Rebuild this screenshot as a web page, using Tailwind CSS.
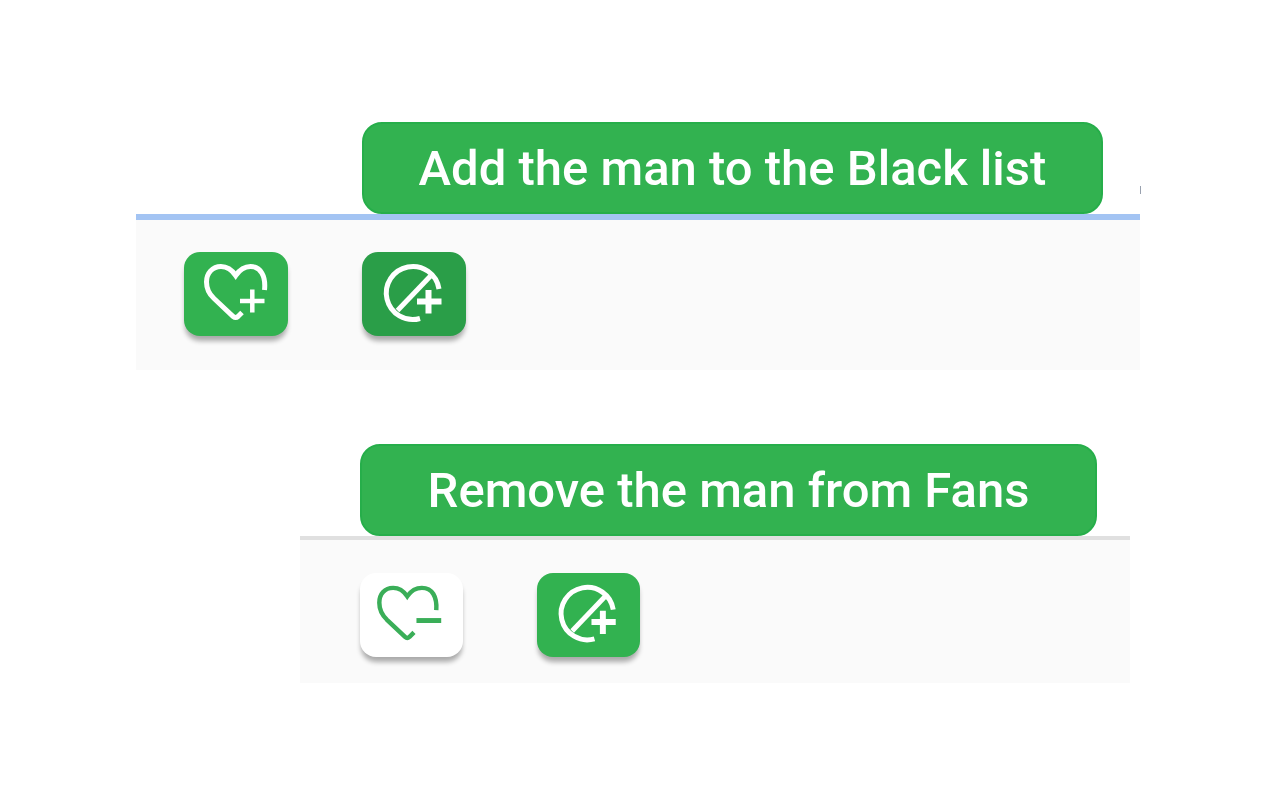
<!DOCTYPE html>
<html lang="en">
<head>
  <meta charset="UTF-8">
  <meta name="viewport" content="width=device-width, initial-scale=1.0">
  <title>Fans and Black list buttons</title>
  <script src="https://cdn.jsdelivr.net/npm/@tailwindcss/browser@4"></script>
  <style>
    body{font-family:Roboto,"Liberation Sans",sans-serif;}
  </style>
</head>
<body class="bg-white min-h-screen">

  <!-- shared icon -->
  <svg class="hidden" aria-hidden="true">
    <symbol id="block-add" viewBox="0 0 104 84">
      <path d="M77 37A26.500 26.500 0 1 0 58 66.500" stroke-width="5"/>
      <path d="M35.500 58.500L68.500 24" stroke-width="5"/>
      <path d="M55 49.500H79.500M66.500 38V61.500" stroke-width="6"/>
    </symbol>
  </svg>

  <main class="flex flex-col gap-[74px] pt-[122px]">

    <!-- man is not a fan yet -->
    <section class="ml-[136px] mr-[140px]">
      <div class="relative">
        <div id="tipBlock" role="tooltip" class="ml-[226px] w-[741px] max-w-full h-[92px] flex items-center justify-center rounded-[20px] bg-[#32b250] border-2 border-[#26ae4a] text-white text-[49px] leading-none font-medium whitespace-nowrap">Add the man to the Black list</div>
        <span class="absolute -right-px bottom-5 w-px h-2 bg-gray-400"></span>
      </div>
      <div class="flex gap-[74px] h-[156px] pl-12 pt-8 bg-[#fafafa] border-t-6 border-[#a3c4f3]">
        <button type="button" aria-label="Add the man to Fans" class="w-[104px] h-[84px] rounded-2xl bg-[#32b250] text-white shadow-[0_6px_5px_-1px_rgba(0,0,0,0.32)]">
          <svg class="block w-full" viewBox="0 0 104 84" fill="none" stroke="currentColor" stroke-width="5">
            <path d="M80.500 38C82 24 76.500 14.500 66.500 14.500C60 14.500 55.500 18 51.700 23.500C48 18 43 14.500 37 14.500C28.500 14.500 22.500 21 22.500 30C22.500 37 25 42 30 46.500L49.200 64.500Q51.700 66.500 54 64.500L58 60.500"/>
            <path d="M56 49H80.500M68.300 37.500V60.500" stroke-width="4.500"/>
          </svg>
        </button>
        <button type="button" aria-describedby="tipBlock" aria-label="Add the man to the Black list" class="w-[104px] h-[84px] rounded-2xl bg-[#2a9e48] text-white shadow-[0_6px_5px_-1px_rgba(0,0,0,0.32)]">
          <svg class="block w-full" viewBox="0 0 104 84" fill="none" stroke="currentColor"><use href="#block-add"/></svg>
        </button>
      </div>
    </section>

    <!-- man is already a fan -->
    <section class="ml-[300px] mr-[150px]">
      <div id="tipFan" role="tooltip" class="ml-[60px] w-[737px] max-w-full h-[92px] flex items-center justify-center rounded-[20px] bg-[#32b250] border-2 border-[#26ae4a] text-white text-[49px] leading-none font-medium whitespace-nowrap">Remove the man from Fans</div>
      <div class="flex gap-[74px] h-[147px] pl-[60px] pt-[33px] bg-[#fafafa] border-t-4 border-[#e0e0e0]">
        <button type="button" aria-describedby="tipFan" aria-label="Remove the man from Fans" class="w-[103px] h-[84px] rounded-2xl bg-white text-[#3aae58] shadow-[0_6px_5px_-1px_rgba(0,0,0,0.32)]">
          <svg class="block w-full" viewBox="0 0 104 84" fill="none" stroke="currentColor" stroke-width="4.500">
            <path d="M77 37.500C78 24 73 15 62.500 15C56 15 51.500 18 47.700 23.500C44 18 39 15 33.500 15C25 15 19.500 21 19.500 30C19.500 37 22 42 27 47L45.500 64.500Q47.700 66.500 50 64.500L54.500 60"/>
            <path d="M57 48H82" stroke-width="5"/>
          </svg>
        </button>
        <button type="button" aria-label="Add the man to the Black list" class="w-[103px] h-[84px] rounded-2xl bg-[#32b250] text-white shadow-[0_6px_5px_-1px_rgba(0,0,0,0.32)]">
          <svg class="block w-full" viewBox="0 0 104 84" fill="none" stroke="currentColor"><use href="#block-add"/></svg>
        </button>
      </div>
    </section>

  </main>
</body>
</html>
